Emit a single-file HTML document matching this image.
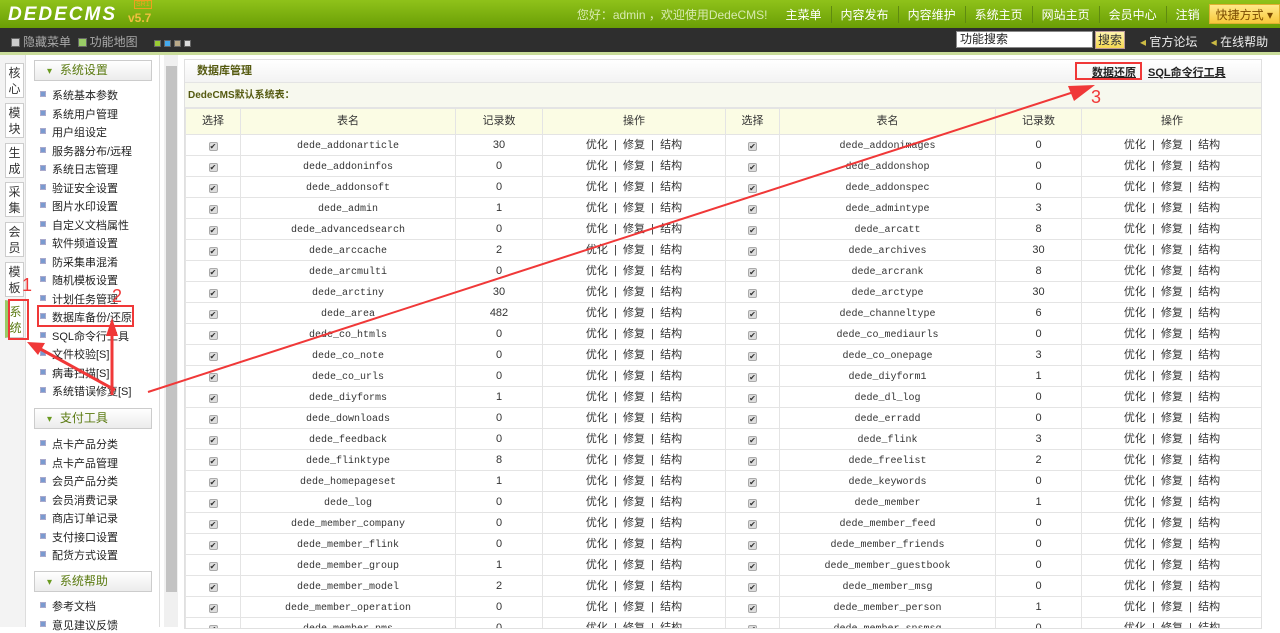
<!DOCTYPE html>
<html><head><meta charset="utf-8"><style>
*{margin:0;padding:0;box-sizing:border-box}
body{width:1280px;height:627px;overflow:hidden;background:#fff;font-family:"Liberation Sans","Noto Sans CJK SC",sans-serif;font-size:12px;color:#333;position:relative}
#top{position:absolute;left:0;top:0;width:1280px;height:28px;background:linear-gradient(#8fc21a,#6a9e05);}
#logo{position:absolute;left:8px;top:4px;color:#fff;font:italic bold 19px "Liberation Sans",sans-serif;letter-spacing:2px}
#ver{position:absolute;left:128px;top:11px;color:#f0c040;font:bold 12px "Liberation Sans",sans-serif}
#sr{position:absolute;left:134px;top:0;color:#f0a020;font-size:7px;border:1px solid #f0a020;padding:0 1px;line-height:7px}
#nav{position:absolute;right:0;top:0;height:28px;display:flex;align-items:center;color:#fff;font-size:12px}
#nav span{padding:0 9px;border-left:1px solid #5f8a10}
#nav .hi{color:#d8eab0;border:none}
#quick{background:linear-gradient(#ffe98a,#f8c83a);color:#7a4a00;height:20px;line-height:20px;padding:0 6px!important;margin-right:0;border:1px solid #e0b030!important}
#bar2{position:absolute;top:28px;left:0;width:1280px;height:24px;background:#2e2e2e;color:#aaa}
#bar2 .l{position:absolute;left:11px;top:5px;font-size:12px}
#bar2 .sq{display:inline-block;width:9px;height:9px;border:1px solid #666;vertical-align:-1px;margin-right:3px}
#srch{position:absolute;left:956px;top:3px;width:137px;height:17px;background:#fff;border:1px solid #888;color:#222;padding-left:3px;line-height:15px}
#sbtn{position:absolute;left:1095px;top:3px;width:30px;height:18px;background:linear-gradient(#fff5b0,#f5d850);color:#333;text-align:center;line-height:17px;border:1px solid #b99}
#lk{position:absolute;left:1140px;top:5px;color:#eee}
#gl{position:absolute;top:52px;left:0;width:1280px;height:3px;background:#c9dc9a}
#tabs{position:absolute;top:55px;left:0;width:26px;height:572px;background:#f3f3f3;border-right:1px solid #ddd}
.tab{position:absolute;left:5px;width:19px;height:35px;background:#fff;border:1px solid #ccc;font-size:12px;line-height:16px;text-align:center;padding-top:1px;color:#333}
#menu{position:absolute;top:55px;left:26px;width:134px;height:572px;background:#fff;border-right:1px solid #ddd}
.mh{position:absolute;left:8px;width:118px;height:21px;border:1px solid #ccc;background:linear-gradient(#fff,#ececec);color:#5a7a10;font-size:12px;line-height:19px;padding-left:12px}
.mh:before{content:"▾ ";color:#6a9a20;font-size:10px;margin-right:5px}
.mi{position:absolute;left:14px;font-size:11px;color:#222;white-space:nowrap}
.mi:before{content:"";display:inline-block;width:4px;height:4px;background:#7a9ad0;border:1px solid #aac;margin-right:6px;vertical-align:2px}
#sb{position:absolute;left:164px;top:55px;width:14px;height:572px;background:#f0f0f0}
#thumb{position:absolute;left:2px;top:11px;width:11px;height:526px;background:#c3c3c3}
#box{position:absolute;left:184px;top:59px;width:1078px;height:570px;border:1px solid #e0e0e0;overflow:hidden}
#tt{height:23px;background:linear-gradient(#fff,#f3f3f3);border-bottom:1px solid #e4e4e4;color:#555a10;font-weight:bold;padding-left:12px;line-height:22px;font-size:11px}
#st{height:25px;background:#f7f8ee;color:#555a10;font-weight:bold;padding-left:3px;line-height:25px;font-size:10px;border-bottom:1px solid #e4e4e4}
table{border-collapse:collapse;table-layout:fixed;width:1077px}
td{border:1px solid #e4e4e4;text-align:center;height:21px;font-size:11px;color:#333;white-space:nowrap;overflow:hidden;padding:0;line-height:19px}
tr.h td{background:#fbfce4;height:26px;font-size:11px}
.m{font-family:"Liberation Mono","Noto Sans CJK SC",monospace;font-size:10px;padding-top:2px;line-height:17px}
.cb{display:inline-block;width:9px;height:9px;background:#ddd;border:1px solid #aaa;border-radius:2px;font-size:8px;line-height:7px;color:#333;vertical-align:-1px}
a.u{color:#222;text-decoration:underline;font-weight:bold;position:absolute;top:64px;font-size:11px}
</style></head><body>
<div id="top"><div id="logo">DEDECMS</div><div id="sr">SR1</div><div id="ver">v5.7</div>
<div id="nav"><span class="hi">您好：admin ，欢迎使用DedeCMS!</span><span style="border:none">主菜单</span><span>内容发布</span><span>内容维护</span><span>系统主页</span><span>网站主页</span><span>会员中心</span><span>注销</span><span id="quick">快捷方式 ▾</span></div></div>
<div id="bar2"><div class="l"><span class="sq" style="background:#ccc"></span>隐藏菜单 &nbsp;<span class="sq" style="background:#9c6"></span>功能地图 &nbsp;&nbsp;&nbsp;&nbsp;<span class="sq" style="background:#9c3;width:7px;height:7px"></span><span class="sq" style="background:#4ae;width:7px;height:7px"></span><span class="sq" style="background:#ba8;width:7px;height:7px"></span><span class="sq" style="background:#ddd;width:7px;height:7px"></span></div>
<div id="srch">功能搜索</div><div id="sbtn">搜索</div><div id="lk"><span style="color:#cb4">◂</span> 官方论坛 &nbsp;&nbsp;&nbsp;<span style="color:#cb4">◂</span> 在线帮助</div></div>
<div id="gl"></div>
<div id="tabs">
<div class="tab" style="top:8px">核<br>心</div><div class="tab" style="top:48px">模<br>块</div><div class="tab" style="top:88px">生<br>成</div><div class="tab" style="top:127px">采<br>集</div><div class="tab" style="top:167px">会<br>员</div><div class="tab" style="top:207px">模<br>板</div><div class="tab" style="top:245px;height:38px;border-left:3px solid #9c6;color:#5a7a10;padding-top:3px">系<br>统</div>
</div>
<div id="menu">
<div class="mh" style="top:5px">系统设置</div>
<div class="mi" style="top:32px">系统基本参数</div><div class="mi" style="top:51px">系统用户管理</div><div class="mi" style="top:69px">用户组设定</div><div class="mi" style="top:88px">服务器分布/远程</div><div class="mi" style="top:106px">系统日志管理</div><div class="mi" style="top:125px">验证安全设置</div><div class="mi" style="top:143px">图片水印设置</div><div class="mi" style="top:162px">自定义文档属性</div><div class="mi" style="top:180px">软件频道设置</div><div class="mi" style="top:199px">防采集串混淆</div><div class="mi" style="top:217px">随机模板设置</div><div class="mi" style="top:236px">计划任务管理</div><div class="mi" style="top:254px">数据库备份/还原</div><div class="mi" style="top:273px">SQL命令行工具</div><div class="mi" style="top:291px">文件校验[S]</div><div class="mi" style="top:310px">病毒扫描[S]</div><div class="mi" style="top:328px">系统错误修复[S]</div>
<div class="mh" style="top:353px">支付工具</div>
<div class="mi" style="top:381px">点卡产品分类</div><div class="mi" style="top:400px">点卡产品管理</div><div class="mi" style="top:418px">会员产品分类</div><div class="mi" style="top:437px">会员消费记录</div><div class="mi" style="top:455px">商店订单记录</div><div class="mi" style="top:474px">支付接口设置</div><div class="mi" style="top:492px">配货方式设置</div>
<div class="mh" style="top:516px">系统帮助</div>
<div class="mi" style="top:543px">参考文档</div><div class="mi" style="top:562px">意见建议反馈</div>
</div>
<div id="sb"><div id="thumb"></div></div>
<div id="box"><div id="tt">数据库管理</div><div id="st">DedeCMS默认系统表：</div>
<table><colgroup><col style="width:55px"><col style="width:215px"><col style="width:87px"><col style="width:183px"><col style="width:54px"><col style="width:216px"><col style="width:86px"><col style="width:181px"></colgroup>
<tr class="h"><td>选择</td><td>表名</td><td>记录数</td><td>操作</td><td>选择</td><td>表名</td><td>记录数</td><td>操作</td></tr>
<tr><td><span class="cb">✔</span></td><td class="m">dede_addonarticle</td><td>30</td><td>优化 &nbsp;|&nbsp; 修复 &nbsp;|&nbsp; 结构</td><td><span class="cb">✔</span></td><td class="m">dede_addonimages</td><td>0</td><td>优化 &nbsp;|&nbsp; 修复 &nbsp;|&nbsp; 结构</td></tr>
<tr><td><span class="cb">✔</span></td><td class="m">dede_addoninfos</td><td>0</td><td>优化 &nbsp;|&nbsp; 修复 &nbsp;|&nbsp; 结构</td><td><span class="cb">✔</span></td><td class="m">dede_addonshop</td><td>0</td><td>优化 &nbsp;|&nbsp; 修复 &nbsp;|&nbsp; 结构</td></tr>
<tr><td><span class="cb">✔</span></td><td class="m">dede_addonsoft</td><td>0</td><td>优化 &nbsp;|&nbsp; 修复 &nbsp;|&nbsp; 结构</td><td><span class="cb">✔</span></td><td class="m">dede_addonspec</td><td>0</td><td>优化 &nbsp;|&nbsp; 修复 &nbsp;|&nbsp; 结构</td></tr>
<tr><td><span class="cb">✔</span></td><td class="m">dede_admin</td><td>1</td><td>优化 &nbsp;|&nbsp; 修复 &nbsp;|&nbsp; 结构</td><td><span class="cb">✔</span></td><td class="m">dede_admintype</td><td>3</td><td>优化 &nbsp;|&nbsp; 修复 &nbsp;|&nbsp; 结构</td></tr>
<tr><td><span class="cb">✔</span></td><td class="m">dede_advancedsearch</td><td>0</td><td>优化 &nbsp;|&nbsp; 修复 &nbsp;|&nbsp; 结构</td><td><span class="cb">✔</span></td><td class="m">dede_arcatt</td><td>8</td><td>优化 &nbsp;|&nbsp; 修复 &nbsp;|&nbsp; 结构</td></tr>
<tr><td><span class="cb">✔</span></td><td class="m">dede_arccache</td><td>2</td><td>优化 &nbsp;|&nbsp; 修复 &nbsp;|&nbsp; 结构</td><td><span class="cb">✔</span></td><td class="m">dede_archives</td><td>30</td><td>优化 &nbsp;|&nbsp; 修复 &nbsp;|&nbsp; 结构</td></tr>
<tr><td><span class="cb">✔</span></td><td class="m">dede_arcmulti</td><td>0</td><td>优化 &nbsp;|&nbsp; 修复 &nbsp;|&nbsp; 结构</td><td><span class="cb">✔</span></td><td class="m">dede_arcrank</td><td>8</td><td>优化 &nbsp;|&nbsp; 修复 &nbsp;|&nbsp; 结构</td></tr>
<tr><td><span class="cb">✔</span></td><td class="m">dede_arctiny</td><td>30</td><td>优化 &nbsp;|&nbsp; 修复 &nbsp;|&nbsp; 结构</td><td><span class="cb">✔</span></td><td class="m">dede_arctype</td><td>30</td><td>优化 &nbsp;|&nbsp; 修复 &nbsp;|&nbsp; 结构</td></tr>
<tr><td><span class="cb">✔</span></td><td class="m">dede_area</td><td>482</td><td>优化 &nbsp;|&nbsp; 修复 &nbsp;|&nbsp; 结构</td><td><span class="cb">✔</span></td><td class="m">dede_channeltype</td><td>6</td><td>优化 &nbsp;|&nbsp; 修复 &nbsp;|&nbsp; 结构</td></tr>
<tr><td><span class="cb">✔</span></td><td class="m">dede_co_htmls</td><td>0</td><td>优化 &nbsp;|&nbsp; 修复 &nbsp;|&nbsp; 结构</td><td><span class="cb">✔</span></td><td class="m">dede_co_mediaurls</td><td>0</td><td>优化 &nbsp;|&nbsp; 修复 &nbsp;|&nbsp; 结构</td></tr>
<tr><td><span class="cb">✔</span></td><td class="m">dede_co_note</td><td>0</td><td>优化 &nbsp;|&nbsp; 修复 &nbsp;|&nbsp; 结构</td><td><span class="cb">✔</span></td><td class="m">dede_co_onepage</td><td>3</td><td>优化 &nbsp;|&nbsp; 修复 &nbsp;|&nbsp; 结构</td></tr>
<tr><td><span class="cb">✔</span></td><td class="m">dede_co_urls</td><td>0</td><td>优化 &nbsp;|&nbsp; 修复 &nbsp;|&nbsp; 结构</td><td><span class="cb">✔</span></td><td class="m">dede_diyform1</td><td>1</td><td>优化 &nbsp;|&nbsp; 修复 &nbsp;|&nbsp; 结构</td></tr>
<tr><td><span class="cb">✔</span></td><td class="m">dede_diyforms</td><td>1</td><td>优化 &nbsp;|&nbsp; 修复 &nbsp;|&nbsp; 结构</td><td><span class="cb">✔</span></td><td class="m">dede_dl_log</td><td>0</td><td>优化 &nbsp;|&nbsp; 修复 &nbsp;|&nbsp; 结构</td></tr>
<tr><td><span class="cb">✔</span></td><td class="m">dede_downloads</td><td>0</td><td>优化 &nbsp;|&nbsp; 修复 &nbsp;|&nbsp; 结构</td><td><span class="cb">✔</span></td><td class="m">dede_erradd</td><td>0</td><td>优化 &nbsp;|&nbsp; 修复 &nbsp;|&nbsp; 结构</td></tr>
<tr><td><span class="cb">✔</span></td><td class="m">dede_feedback</td><td>0</td><td>优化 &nbsp;|&nbsp; 修复 &nbsp;|&nbsp; 结构</td><td><span class="cb">✔</span></td><td class="m">dede_flink</td><td>3</td><td>优化 &nbsp;|&nbsp; 修复 &nbsp;|&nbsp; 结构</td></tr>
<tr><td><span class="cb">✔</span></td><td class="m">dede_flinktype</td><td>8</td><td>优化 &nbsp;|&nbsp; 修复 &nbsp;|&nbsp; 结构</td><td><span class="cb">✔</span></td><td class="m">dede_freelist</td><td>2</td><td>优化 &nbsp;|&nbsp; 修复 &nbsp;|&nbsp; 结构</td></tr>
<tr><td><span class="cb">✔</span></td><td class="m">dede_homepageset</td><td>1</td><td>优化 &nbsp;|&nbsp; 修复 &nbsp;|&nbsp; 结构</td><td><span class="cb">✔</span></td><td class="m">dede_keywords</td><td>0</td><td>优化 &nbsp;|&nbsp; 修复 &nbsp;|&nbsp; 结构</td></tr>
<tr><td><span class="cb">✔</span></td><td class="m">dede_log</td><td>0</td><td>优化 &nbsp;|&nbsp; 修复 &nbsp;|&nbsp; 结构</td><td><span class="cb">✔</span></td><td class="m">dede_member</td><td>1</td><td>优化 &nbsp;|&nbsp; 修复 &nbsp;|&nbsp; 结构</td></tr>
<tr><td><span class="cb">✔</span></td><td class="m">dede_member_company</td><td>0</td><td>优化 &nbsp;|&nbsp; 修复 &nbsp;|&nbsp; 结构</td><td><span class="cb">✔</span></td><td class="m">dede_member_feed</td><td>0</td><td>优化 &nbsp;|&nbsp; 修复 &nbsp;|&nbsp; 结构</td></tr>
<tr><td><span class="cb">✔</span></td><td class="m">dede_member_flink</td><td>0</td><td>优化 &nbsp;|&nbsp; 修复 &nbsp;|&nbsp; 结构</td><td><span class="cb">✔</span></td><td class="m">dede_member_friends</td><td>0</td><td>优化 &nbsp;|&nbsp; 修复 &nbsp;|&nbsp; 结构</td></tr>
<tr><td><span class="cb">✔</span></td><td class="m">dede_member_group</td><td>1</td><td>优化 &nbsp;|&nbsp; 修复 &nbsp;|&nbsp; 结构</td><td><span class="cb">✔</span></td><td class="m">dede_member_guestbook</td><td>0</td><td>优化 &nbsp;|&nbsp; 修复 &nbsp;|&nbsp; 结构</td></tr>
<tr><td><span class="cb">✔</span></td><td class="m">dede_member_model</td><td>2</td><td>优化 &nbsp;|&nbsp; 修复 &nbsp;|&nbsp; 结构</td><td><span class="cb">✔</span></td><td class="m">dede_member_msg</td><td>0</td><td>优化 &nbsp;|&nbsp; 修复 &nbsp;|&nbsp; 结构</td></tr>
<tr><td><span class="cb">✔</span></td><td class="m">dede_member_operation</td><td>0</td><td>优化 &nbsp;|&nbsp; 修复 &nbsp;|&nbsp; 结构</td><td><span class="cb">✔</span></td><td class="m">dede_member_person</td><td>1</td><td>优化 &nbsp;|&nbsp; 修复 &nbsp;|&nbsp; 结构</td></tr>
<tr><td><span class="cb">✔</span></td><td class="m">dede_member_pms</td><td>0</td><td>优化 &nbsp;|&nbsp; 修复 &nbsp;|&nbsp; 结构</td><td><span class="cb">✔</span></td><td class="m">dede_member_snsmsg</td><td>0</td><td>优化 &nbsp;|&nbsp; 修复 &nbsp;|&nbsp; 结构</td></tr>
</table></div>
<a class="u" style="left:1092px">数据还原</a><a class="u" style="left:1148px">SQL命令行工具</a>
<svg width="1280" height="627" style="position:absolute;left:0;top:0;pointer-events:none">
<g fill="none" stroke="#f03838">
<rect x="1076" y="63" width="65" height="16" stroke-width="2"/>
<rect x="38" y="306" width="95" height="20" stroke-width="2"/>
<rect x="9" y="300" width="19" height="39" stroke-width="2"/>
<line x1="148" y1="392" x2="1080" y2="90" stroke-width="2"/>
<line x1="112" y1="395" x2="112" y2="325" stroke-width="3"/>
<line x1="115" y1="390" x2="35" y2="346" stroke-width="3"/>
</g>
<g fill="#f03838">
<polygon points="1095,85 1068,86 1074,101"/>
<polygon points="112,318 106,336 118,336"/>
<polygon points="27,342 38,355 45,343"/>
</g>
<g fill="#f03838" font-family="Liberation Sans,sans-serif" font-size="18">
<text x="1091" y="103">3</text><text x="112" y="302">2</text><text x="22" y="291">1</text>
</g>
</svg>
</body></html>
